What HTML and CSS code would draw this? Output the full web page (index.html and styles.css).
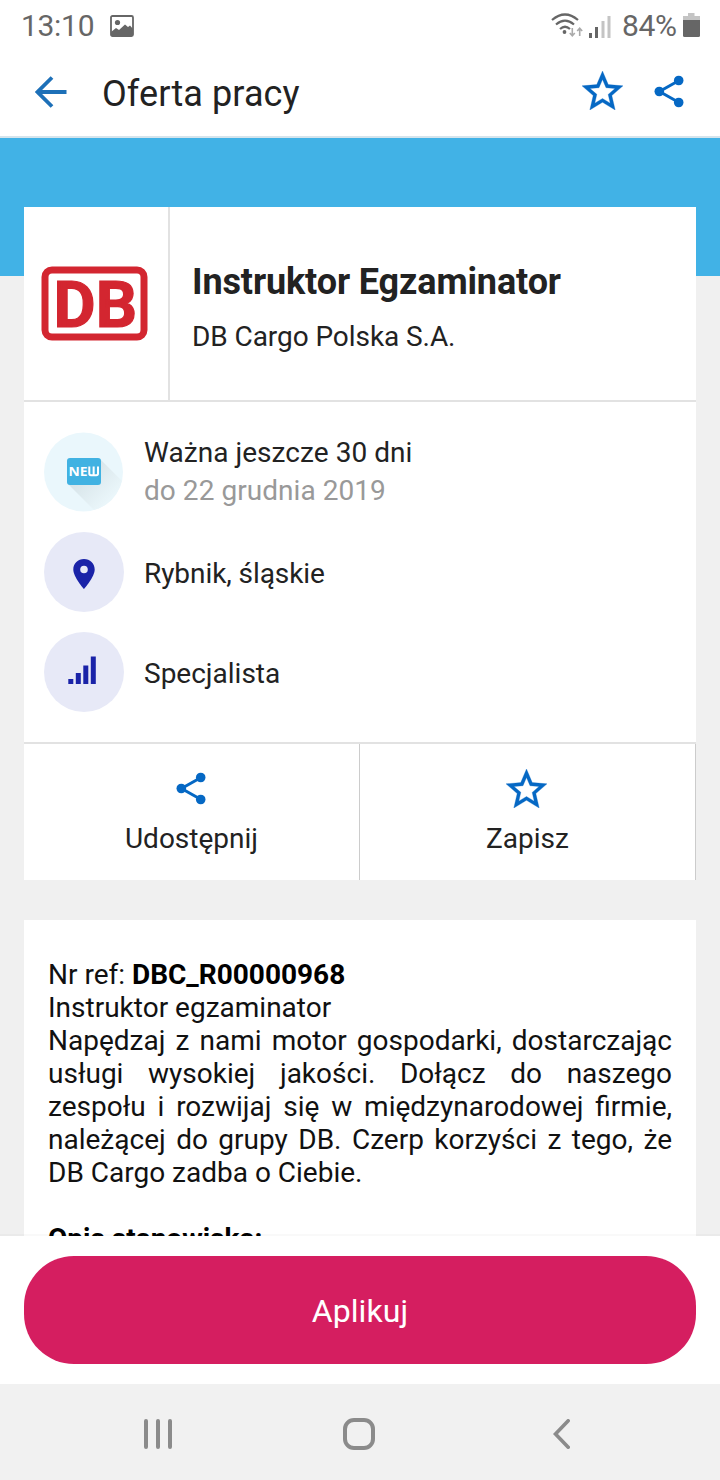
FILE: index.html
```html
<!DOCTYPE html>
<html lang="pl">
<head>
<meta charset="utf-8">
<title>Oferta pracy</title>
<link rel="stylesheet" href="styles.css">
</head>
<body>
<svg class="defs" width="0" height="0">
  <symbol id="star" viewBox="2 2 20 19"><path d="M22 9.240l-7.190-.620L12 2 9.190 8.630 2 9.240l5.460 4.730L5.820 21 12 17.270 18.180 21l-1.630-7.030L22 9.240zM12 15.400l-3.760 2.270 1-4.280-3.320-2.880 4.380-.380L12 6.100l1.710 4.040 4.380.380-3.320 2.880 1 4.280L12 15.400z" fill="#0568c4" stroke="#0568c4" stroke-width=".15"/></symbol>
  <symbol id="share" viewBox="0 0 30 33"><path d="M25 5.500 L5.500 16.500 L25 27.500" fill="none" stroke="#0568c4" stroke-width="3"/><g fill="#0568c4"><circle cx="24.700" cy="5.500" r="4.800"/><circle cx="5.300" cy="16.500" r="4.800"/><circle cx="24.700" cy="27.500" r="4.800"/></g></symbol>
</svg>
<div class="screen">
  <div class="status">
    <span class="clock">13:10</span>
    <svg class="picture" width="24" height="22" viewBox="0 0 24 22"><rect x="1" y="1" width="22" height="20" rx="1.500" fill="none" stroke="#666" stroke-width="1.800"/><circle cx="7.500" cy="7.500" r="2.600" fill="#666"/><path d="M1 17 L6 13 L9 15 L15 9.500 L18 12 L20 10.500 L23 14 V21 H1 Z" fill="#666"/></svg>
    <svg class="wifi" width="32" height="26" viewBox="0 0 32 26"><g fill="none" stroke="#666" stroke-width="2.200"><path d="M1 7 Q14 -4 27 7"/><path d="M5 11.500 Q14 3.800 23 11.500"/><path d="M9 16 Q14 11.500 19 16"/></g><circle cx="13.500" cy="19" r="1.900" fill="#666"/><g fill="none" stroke="#aaa" stroke-width="1.600"><path d="M21.300 15 V22.500 M18.800 20 L21.300 22.700 L23.800 20"/><path d="M28.700 23 V15.500 M26.200 18 L28.700 15.300 L31.200 18"/></g></svg>
    <svg class="signal" width="22" height="23" viewBox="0 0 22 23"><path d="M0 18h3v5H0zM6 12h3v11H6z" fill="#666"/><path d="M12.500 6h3v17h-3zM18.500 1h3v22h-3z" fill="#c4c4c4"/></svg>
    <span class="percent">84%</span>
    <svg class="battery" width="17" height="24" viewBox="0 0 17 24"><path d="M5 0h6.500v3H17v5H0V3h5z" fill="#c4c4c4"/><path d="M0 7h17v15.500q0 1.500-1.500 1.500h-14Q0 24 0 22.500z" fill="#666"/></svg>
  </div>
  <header class="appbar">
    <svg class="back" width="32" height="32" viewBox="0 0 32 32"><path d="M31.500 16 H3 M17 1.500 L2.500 16 L17 30.500" fill="none" stroke="#1d70b8" stroke-width="3.800"/></svg>
    <h1 class="heading">Oferta pracy</h1>
    <svg class="bar-star" width="41" height="39"><use href="#star"/></svg>
    <svg class="bar-share" width="30" height="33"><use href="#share"/></svg>
  </header>
  <main class="content">
    <section class="card">
      <div class="company">
        <div class="logo">
          <svg width="108" height="76" viewBox="0 0 108 76"><rect x="4" y="4" width="99" height="67" rx="7" fill="#fff" stroke="#d32630" stroke-width="7"/><text class="logo-text" x="12.500" y="60.500" textLength="83.500" lengthAdjust="spacingAndGlyphs">DB</text></svg>
        </div>
        <div class="names"><h2 class="job">Instruktor Egzaminator</h2><p class="employer">DB Cargo Polska S.A.</p></div>
      </div>
      <ul class="details">
        <li class="detail">
          <svg width="80" height="80" viewBox="0 0 80 80"><defs><clipPath id="disc"><circle cx="39.500" cy="40" r="39.500"/></clipPath><linearGradient id="fade" gradientUnits="userSpaceOnUse" x1="40" y1="37" x2="68" y2="65"><stop offset="0" stop-color="#d6e3e8"/><stop offset="1" stop-color="#eaf6fa"/></linearGradient></defs><circle cx="39.500" cy="40" r="39.500" fill="#eaf7fc"/><path d="M56 27 L91 62 L59 87 L24 52 Z" fill="url(#fade)" clip-path="url(#disc)"/><rect x="23" y="26" width="34" height="27" rx="3" fill="#41b2e2"/><text class="new-text" x="24.500" y="44.300" textLength="19" lengthAdjust="spacingAndGlyphs">NE</text><path d="M45.300 34.500 V41.500 Q45.300 43.300 47 43.300 H52.300 Q54 43.300 54 41.500 V34.500 M49.650 34.500 V43" fill="none" stroke="#fff" stroke-width="2"/></svg>
          <p class="label validity">Ważna jeszcze 30 dni<br><span class="until">do 22 grudnia 2019</span></p>
        </li>
        <li class="detail">
          <svg width="80" height="80" viewBox="0 0 80 80"><circle cx="40" cy="40" r="40" fill="#e7e9f7"/><path fill-rule="evenodd" d="M40 27 C34 27 29.300 31.600 29.300 37.500 C29.300 45 40 57 40 57 S50.700 45 50.700 37.500 C50.700 31.600 46 27 40 27 Z M40 33.700 a3.800 3.800 0 1 1 0 7.600 a3.800 3.800 0 1 1 0-7.600 Z" fill="#1a23a8"/></svg>
          <p class="label place">Rybnik, śląskie</p>
        </li>
        <li class="detail">
          <svg width="80" height="80" viewBox="0 0 80 80"><circle cx="40" cy="40" r="40" fill="#e7e9f7"/><path d="M24.300 47h5v5h-5zM31.800 41h5v11h-5zM39.300 33.500h5V52h-5zM46.800 24.500h5V52h-5z" fill="#1a23a8"/></svg>
          <p class="label">Specjalista</p>
        </li>
      </ul>
      <div class="actions">
        <div class="action"><svg class="share-icon" width="30" height="33"><use href="#share"/></svg><span>Udostępnij</span></div>
        <div class="action"><svg class="star-icon" width="41" height="39"><use href="#star"/></svg><span>Zapisz</span></div>
      </div>
    </section>
    <article class="description">
      <p>Nr ref: <b>DBC_R00000968</b></p>
      <p>Instruktor egzaminator</p>
      <p class="intro">Napędzaj z nami motor gospodarki, dostarczając usługi wysokiej jakości. Dołącz do naszego zespołu i rozwijaj się w międzynarodowej firmie, należącej do grupy DB. Czerp korzyści z tego, że DB Cargo zadba o Ciebie.</p>
      <p><b>Opis stanowiska:</b></p>
    </article>
  </main>
  <div class="apply-bar"><button class="apply">Aplikuj</button></div>
  <nav class="navbar">
    <svg width="28" height="30" viewBox="0 0 28 30"><path d="M2 2V28M14 2V28M26 2V28" stroke="#8b8b8b" stroke-width="4" stroke-linecap="round"/></svg>
    <svg class="home" width="32" height="32" viewBox="0 0 32 32"><rect x="2" y="2" width="28" height="28" rx="9" fill="none" stroke="#8b8b8b" stroke-width="4"/></svg>
    <svg width="17" height="30" viewBox="0 0 17 30"><path d="M15.200 1.800L2.500 15L15.200 28.200" fill="none" stroke="#8b8b8b" stroke-width="3.600" stroke-linecap="round"/></svg>
  </nav>
</div>
</body>
</html>
```
FILE: styles.css
```css
* { box-sizing: border-box; margin: 0; padding: 0; }
body { width: 720px; height: 1480px; overflow: hidden; background: #fff; font-family: Roboto, sans-serif; color: #222; }
svg { display: block; flex: none; }
.defs { position: absolute; }
.screen { display: flex; flex-direction: column; height: 1480px; }
.status { display: flex; align-items: center; height: 50px; padding: 2px 20px 0 21px; color: #666; font-size: 30px; line-height: 48px; }
.clock { width: 89px; letter-spacing: -.3px; }
.picture { margin-bottom: 1px; }
.wifi { margin-left: auto; }
.signal { margin-left: 6px; margin-top: 1px; }
.percent { width: 56px; margin-left: 11px; letter-spacing: -.3px; white-space: nowrap; }
.battery { margin-left: 5px; margin-bottom: 2px; }
.appbar { display: flex; align-items: center; height: 88px; padding: 0 36px 2px; border-bottom: 2px solid #d5e4ec; }
.back { margin-left: -1px; }
.heading { margin-left: 35px; margin-top: 3px; font-size: 36px; line-height: 44px; font-weight: 400; letter-spacing: .1px; white-space: nowrap; }
.bar-star { margin-left: auto; margin-bottom: 3px; }
.bar-share { margin-left: 31px; margin-bottom: 1px; }
.content { height: 1098px; padding: 69px 24px 0; overflow: hidden; background: linear-gradient(#41b2e6 0 138px, #f0f0f0 138px); }
.card { height: 673px; background: #fff; }
.company { display: flex; height: 195px; border-bottom: 2px solid #e2e2e2; }
.logo { display: flex; align-items: center; width: 146px; padding-left: 17px; border-right: 2px solid #e2e2e2; }
.logo-text { font: 700 65px Roboto, sans-serif; fill: #d32630; stroke: #d32630; stroke-width: 1.2px; }
.names { padding: 53px 0 0 22px; }
.job { font-size: 36px; line-height: 44px; font-weight: 700; letter-spacing: -.12px; white-space: nowrap; }
.employer { margin-top: 16px; font-size: 28px; line-height: 34px; letter-spacing: -.07px; }
.details { display: flex; flex-direction: column; gap: 20px; height: 340px; padding: 30px 20px; list-style: none; }
.detail { display: flex; align-items: center; gap: 20px; height: 80px; }
.label { padding-top: 3px; font-size: 28px; line-height: 38px; white-space: nowrap; }
.validity { padding: 0 0 1px; letter-spacing: .05px; }
.place { letter-spacing: -.07px; }
.until { color: #999; }
.new-text { font: 700 13px "Open Sans", sans-serif; fill: #fff; }
.actions { display: flex; height: 138px; border-top: 2px solid #e2e2e2; }
.action { display: flex; flex: 1; flex-direction: column; align-items: center; justify-content: space-between; padding: 24px 0 24px; border-right: 1px solid #ccc; font-size: 28px; line-height: 34px; }
.share-icon { margin: 4px 1px 0 0; }
.star-icon { margin: 1px 2px 0 0; }
.description { height: 400px; margin-top: 40px; padding: 38px 24px; background: #fff; color: #111; font-size: 28px; line-height: 33px; }
.description b { color: #000; }
.intro { margin-bottom: 33px; text-align: justify; }
.apply-bar { height: 148px; padding: 20px 24px; background: #fff; box-shadow: 0 -2px 0 rgba(0, 0, 0, .025); }
.apply { display: block; width: 672px; height: 108px; padding-top: 2px; border: 0; border-radius: 50px; background: #d51e60; color: #fff; font: 400 32px/38px Roboto, sans-serif; letter-spacing: .1px; }
.navbar { display: flex; align-items: center; justify-content: space-between; height: 96px; padding: 4px 150px 0 144px; background: #f1f1f1; }
.home { margin-right: 7px; }
```
